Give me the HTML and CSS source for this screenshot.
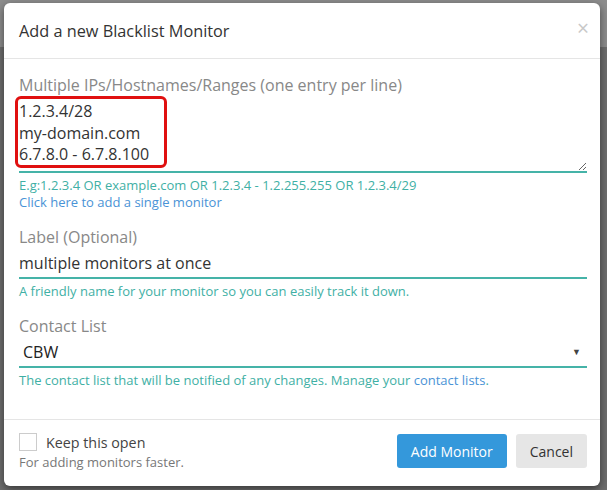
FILE: index.html
```html
<!DOCTYPE html>
<html lang="en">
<head>
  <meta charset="UTF-8" />
  <title>Add a new Blacklist Monitor</title>
  <meta name="viewport" content="width=device-width, initial-scale=1.0" />
  <link rel="stylesheet" href="styles.css">
</head>
<body>
  <div class="modal">
    <div class="modal-header">
      <h4>Add a new Blacklist Monitor</h4>
      <span class="close">&times;</span>
    </div>
    <div class="modal-body">
      <label class="field-label">Multiple IPs/Hostnames/Ranges (one entry per line)</label>
      <div class="area-wrap">
        <textarea rows="3">1.2.3.4/28
my-domain.com
6.7.8.0 - 6.7.8.100</textarea>
        <div class="highlight"></div>
      </div>
      <p class="help">E.g:1.2.3.4 OR example.com OR 1.2.3.4 - 1.2.255.255 OR 1.2.3.4/29</p>
      <a class="help link" href="#">Click here to add a single monitor</a>

      <label class="field-label spaced">Label (Optional)</label>
      <input class="text-input" type="text" value="multiple monitors at once" />
      <p class="help">A friendly name for your monitor so you can easily track it down.</p>

      <label class="field-label spaced">Contact List</label>
      <div class="select">
        <span>CBW</span>
        <span class="arrow">&#9660;</span>
      </div>
      <p class="help">The contact list that will be notified of any changes. Manage your <a href="#">contact lists</a>.</p>
    </div>
    <div class="modal-footer">
      <div class="keep">
        <label class="check-row"><span class="checkbox"></span>Keep this open</label>
        <p class="keep-note">For adding monitors faster.</p>
      </div>
      <div class="buttons">
        <button class="btn primary">Add Monitor</button>
        <button class="btn">Cancel</button>
      </div>
    </div>
  </div>
</body>
</html>
```

FILE: styles.css
```css
body {
  font-family: 'Open Sans', sans-serif;
  margin: 0;
  height: 490px;
  overflow: hidden;
  background: linear-gradient(#8d8d8d 0, #8d8d8d 47px, #6e6e6e 47px);
  color: #333;
}

.modal {
  width: 596px;
  height: 483px;
  margin: 3px 0 0 4px;
  background: white;
  border-radius: 6px;
  box-shadow: 0 3px 9px rgba(0,0,0,0.5);
  display: flex;
  flex-direction: column;
}

.modal-header {
  display: flex;
  justify-content: space-between;
  padding: 16px 15px 15px;
  border-bottom: 1px solid #e5e5e5;
}

.modal-header h4 {
  margin: 0;
  font-size: 16.3px;
  font-weight: normal;
  line-height: 24px;
}

.close {
  color: #c8c8c8;
  font-size: 21px;
  line-height: 18px;
  margin-right: -4px;
}

.modal-body {
  flex: 1;
  padding: 15px 13px 0 15px;
}

.field-label {
  display: block;
  font-size: 16px;
  line-height: 22px;
  color: #888;
}

.field-label.spaced {
  margin-top: 15px;
}

.area-wrap {
  position: relative;
  margin-top: 2px;
}

textarea {
  display: block;
  width: 100%;
  box-sizing: border-box;
  border: none;
  border-bottom: 2px solid #45b3a8;
  padding: 3px 0 5px;
  font-family: 'Open Sans', sans-serif;
  font-size: 16px;
  line-height: 21.5px;
  color: #333;
  outline: none;
}

.highlight {
  position: absolute;
  left: -4px;
  top: -2px;
  width: 146px;
  height: 66px;
  border: 3px solid #e01010;
  border-radius: 6px;
}

.help {
  display: block;
  margin: 4px 0 0;
  font-size: 13px;
  line-height: 17px;
  color: #3fb0a5;
}

.help a, .help.link {
  color: #4a93d6;
  text-decoration: none;
}

.help.link {
  margin-top: 0;
}

.text-input {
  display: block;
  width: 100%;
  box-sizing: border-box;
  border: none;
  border-bottom: 2px solid #45b3a8;
  padding: 4px 0 3px;
  margin: 0;
  font-family: 'Open Sans', sans-serif;
  font-size: 16px;
  line-height: 22px;
  color: #333;
  outline: none;
}

.select {
  display: flex;
  justify-content: space-between;
  align-items: center;
  border-bottom: 2px solid #45b3a8;
  padding: 4px 6px 3px 4px;
  font-size: 16px;
  line-height: 22px;
  color: #222;
}

.arrow {
  font-size: 9px;
  color: #444;
}

.modal-footer {
  display: flex;
  justify-content: space-between;
  border-top: 1px solid #e5e5e5;
  padding: 13px 13px 15px 15px;
}

.check-row {
  display: flex;
  align-items: center;
  font-size: 14.3px;
  line-height: 17px;
  color: #444;
}

.checkbox {
  width: 16px;
  height: 16px;
  border: 1px solid #ccc;
  margin-right: 9px;
}

.keep-note {
  margin: 2px 0 0;
  font-size: 13px;
  line-height: 18px;
  color: #777;
}

.buttons {
  display: flex;
  gap: 9px;
  padding-top: 1px;
}

.btn {
  height: 34px;
  padding: 0 14px;
  border: none;
  border-radius: 3px;
  background: #e6e6e6;
  color: #333;
  font-family: 'Open Sans', sans-serif;
  font-size: 14px;
}

.btn.primary {
  background: #3498db;
  color: white;
}
```
